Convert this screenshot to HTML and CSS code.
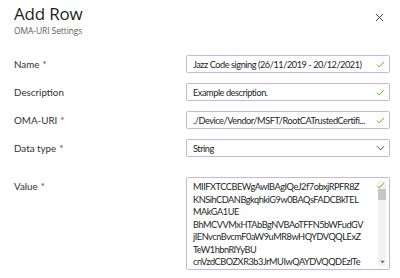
FILE: index.html
```html
<!DOCTYPE html>
<html>
<head>
<meta charset="utf-8">
<link rel="stylesheet" href="styles.css">
</head>
<body>
<div class="panel">
  <header class="head">
    <div class="titles">
      <h1 class="title">Add Row</h1>
      <div class="subtitle">OMA-URI Settings</div>
    </div>
    <svg class="close" width="10" height="10" viewBox="0 0 10 10"><path d="M1 1L9 9M9 1L1 9" stroke="#323130" stroke-width="1" fill="none"/></svg>
  </header>
  <div class="form">
    <label class="label">Name <span class="req">*</span></label>
    <div class="field"><span class="val">Jazz Code signing (26/11/2019 - 20/12/2021)</span><svg class="check" viewBox="0 0 10 8"><path d="M1 4.2L3.6 6.8L9 1.2" stroke="#57a300" fill="none"/></svg></div>

    <label class="label">Description</label>
    <div class="field"><span class="val">Example description.</span><svg class="check" viewBox="0 0 10 8"><path d="M1 4.2L3.6 6.8L9 1.2" stroke="#57a300" fill="none"/></svg></div>

    <label class="label">OMA-URI <span class="req">*</span></label>
    <div class="field"><span class="val">./Device/Vendor/MSFT/RootCATrustedCertifi...</span><svg class="check" viewBox="0 0 10 8"><path d="M1 4.2L3.6 6.8L9 1.2" stroke="#57a300" fill="none"/></svg></div>

    <label class="label">Data type <span class="req">*</span></label>
    <div class="field"><span class="val">String</span><svg class="chev" viewBox="0 0 10 6"><path d="M1 1L5 5L9 1" stroke="#323130" fill="none"/></svg></div>

    <label class="label value-label">Value <span class="req">*</span></label>
    <div class="area">
      <div class="area-text">MIIFXTCCBEWgAwIBAgIQeJ2f7obxjRPFR8Z<br>KNSihCDANBgkqhkiG9w0BAQsFADCBkTEL<br>MAkGA1UE<br>BhMCVVMxHTAbBgNVBAoTFFN5bWFudGV<br>jIENvcnBvcmF0aW9uMR8wHQYDVQQLExZ<br>TeW1hbnRlYyBU<br>cnVzdCBOZXR3b3JrMUIwQAYDVQQDEzlTe</div>
      <div class="side">
        <svg class="check" viewBox="0 0 10 8"><path d="M1 4.2L3.6 6.8L9 1.2" stroke="#57a300" fill="none"/></svg>
        <div class="scroll"><div class="thumb"></div><div class="track"></div><svg class="arrow" viewBox="0 0 6 4"><path d="M0.5 0.5H5.5L3 3.5Z" fill="#605e5c"/></svg></div>
      </div>
    </div>
  </div>
</div>
</body>
</html>
```
FILE: styles.css
```css
* { box-sizing: border-box; }
body {
  margin: 0;
  background: #fff;
  font-family: "Lato", "Noto Sans", sans-serif;
  color: #323130;
  width: 400px;
  height: 278px;
  overflow: hidden;
}
.panel { padding: 3px 10px 0 14px; }
.head {
  display: flex;
  justify-content: space-between;
  align-items: flex-start;
}
.title {
  margin: 0;
  font-family: "Open Sans", sans-serif;
  font-size: 17px;
  font-weight: 400;
  line-height: 22px;
  color: #201f1e;
  letter-spacing: -0.2px;
}
.subtitle {
  font-family: "Open Sans", sans-serif;
  font-size: 8.5px;
  color: #605e5c;
  line-height: 12px;
  letter-spacing: -0.1px;
}
.close { width: 9px; height: 9px; margin-top: 10px; margin-right: 6px; }
.form {
  display: grid;
  grid-template-columns: 172px 204px;
  row-gap: 10px;
  margin-top: 18px;
}
.label {
  font-size: 9.8px;
  display: flex;
  align-items: center;
  gap: 3px;
  color: #323130;
}
.req { color: #a4262c; }
.field {
  height: 18px;
  border: 1px solid #cfb3df;
  border-radius: 2px;
  display: flex;
  align-items: center;
  padding: 0 4px 0 6px;
  gap: 4px;
  font-size: 9.2px;
  letter-spacing: -0.45px;
}
.val {
  flex: 1;
  white-space: nowrap;
  overflow: hidden;
  color: #201f1e;
}
.check { width: 9px; height: 7px; flex: none; }
.chev { width: 9px; height: 6px; flex: none; }
.value-label { align-items: flex-start; margin-top: 10px; padding-top: 3px; }
.area {
  margin-top: 10px;
  height: 93px;
  border: 1px solid #cfb3df;
  border-radius: 2px;
  display: flex;
  padding: 3px 2px 3px 6px;
}
.area-text {
  flex: 1;
  font-size: 9.2px;
  letter-spacing: -0.45px;
  line-height: 12.5px;
  color: #201f1e;
  white-space: nowrap;
  overflow: hidden;
}
.side {
  width: 10px;
  position: relative;
  display: flex;
  flex-direction: column;
  align-items: center;
}
.side .check { position: absolute; top: 1px; left: -1px; z-index: 1; }
.scroll {
  flex: 1;
  width: 8px;
  display: flex;
  flex-direction: column;
  align-items: center;
  background: #f3f2f1;
  padding-top: 8px;
}
.thumb { width: 8px; height: 11px; background: #c8c6c4; }
.track { flex: 1; }
.arrow { width: 5px; height: 4px; margin-bottom: 2px; }
```
